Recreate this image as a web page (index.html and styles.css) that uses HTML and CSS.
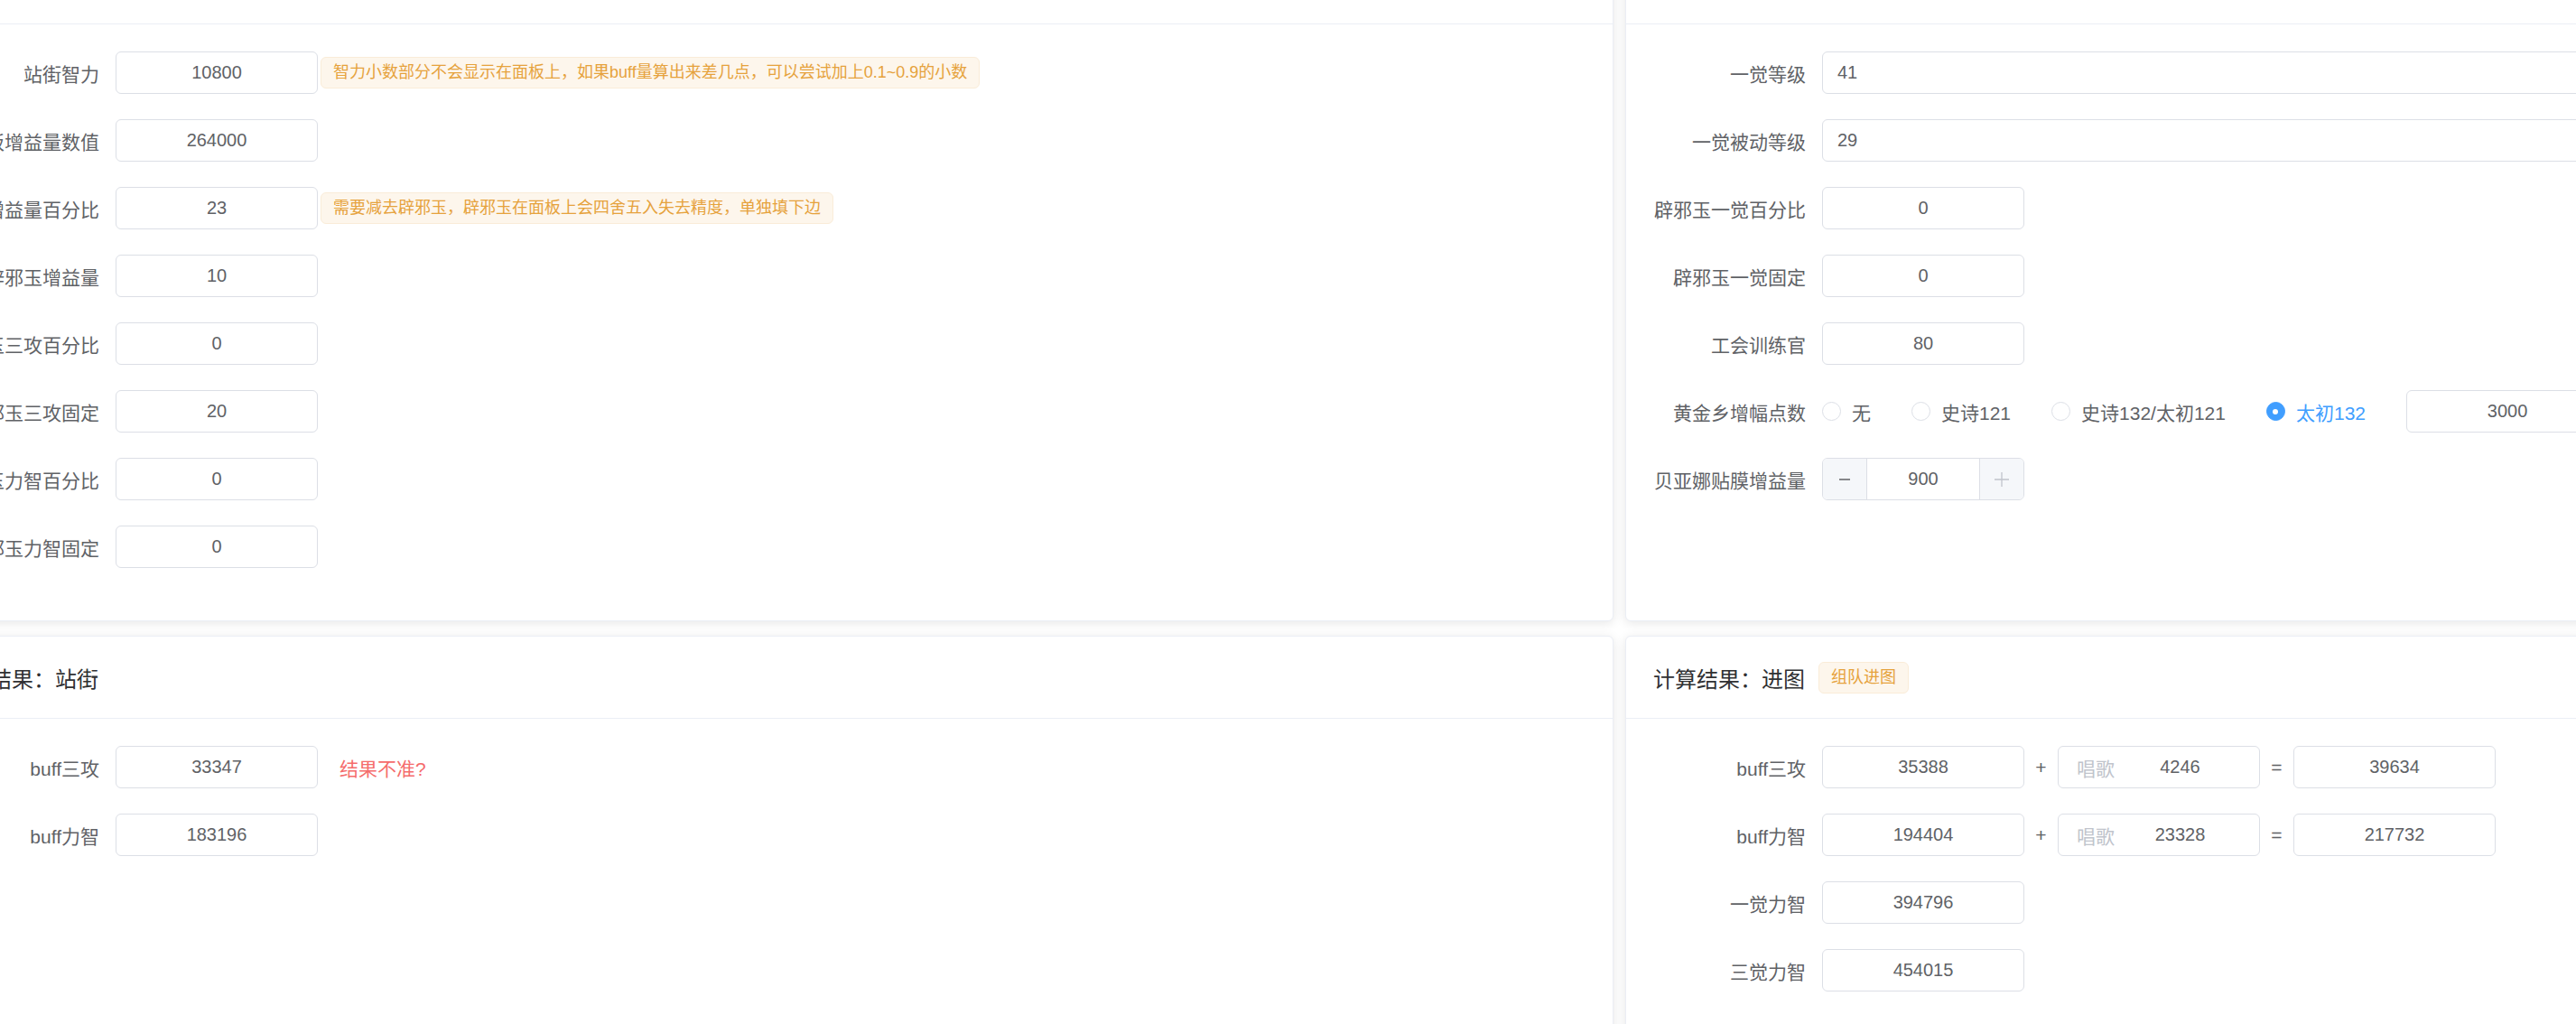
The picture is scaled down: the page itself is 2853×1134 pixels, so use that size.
FILE: index.html
```html
<!DOCTYPE html>
<html lang="zh-CN">
<head>
  <meta charset="UTF-8" />
  <meta name="viewport" content="width=device-width, initial-scale=1.0"/>
  <title>奶妈 buff 计算器</title>
  <link rel="stylesheet" href="styles.css">
</head>
<body>

<div class="page">

  <!-- 站街面板 -->
  <div class="card">
    <div class="card-header">站街面板</div>
    <div class="card-body">
      <div class="form-item">
        <label class="form-label">站街智力</label>
        <div class="form-content">
          <input class="input" value="10800" />
          <span class="tip">智力小数部分不会显示在面板上，如果buff量算出来差几点，可以尝试加上0.1~0.9的小数</span>
        </div>
      </div>
      <div class="form-item">
        <label class="form-label">面板增益量数值</label>
        <div class="form-content"><input class="input" value="264000" /></div>
      </div>
      <div class="form-item">
        <label class="form-label">面板增益量百分比</label>
        <div class="form-content">
          <input class="input" value="23" />
          <span class="tip">需要减去辟邪玉，辟邪玉在面板上会四舍五入失去精度，单独填下边</span>
        </div>
      </div>
      <div class="form-item">
        <label class="form-label">辟邪玉增益量</label>
        <div class="form-content"><input class="input" value="10" /></div>
      </div>
      <div class="form-item">
        <label class="form-label">辟邪玉三攻百分比</label>
        <div class="form-content"><input class="input" value="0" /></div>
      </div>
      <div class="form-item">
        <label class="form-label">辟邪玉三攻固定</label>
        <div class="form-content"><input class="input" value="20" /></div>
      </div>
      <div class="form-item">
        <label class="form-label">辟邪玉力智百分比</label>
        <div class="form-content"><input class="input" value="0" /></div>
      </div>
      <div class="form-item">
        <label class="form-label">辟邪玉力智固定</label>
        <div class="form-content"><input class="input" value="0" /></div>
      </div>
    </div>
  </div>

  <!-- 技能等级 -->
  <div class="card">
    <div class="card-header">技能与装备</div>
    <div class="card-body">
      <div class="form-item">
        <label class="form-label">一觉等级</label>
        <div class="form-content"><input class="input wide" value="41" /></div>
      </div>
      <div class="form-item">
        <label class="form-label">一觉被动等级</label>
        <div class="form-content"><input class="input wide" value="29" /></div>
      </div>
      <div class="form-item">
        <label class="form-label">辟邪玉一觉百分比</label>
        <div class="form-content"><input class="input" value="0" /></div>
      </div>
      <div class="form-item">
        <label class="form-label">辟邪玉一觉固定</label>
        <div class="form-content"><input class="input" value="0" /></div>
      </div>
      <div class="form-item">
        <label class="form-label">工会训练官</label>
        <div class="form-content"><input class="input" value="80" /></div>
      </div>
      <div class="form-item">
        <label class="form-label">黄金乡增幅点数</label>
        <div class="form-content">
          <label class="radio"><span class="radio-inner"></span>无</label>
          <label class="radio"><span class="radio-inner"></span>史诗121</label>
          <label class="radio"><span class="radio-inner"></span>史诗132/太初121</label>
          <label class="radio checked"><span class="radio-inner"></span>太初132</label>
          <input class="input" value="3000" />
        </div>
      </div>
      <div class="form-item">
        <label class="form-label">贝亚娜贴膜增益量</label>
        <div class="form-content">
          <div class="input-number">
            <span class="step minus">
              <svg width="16" height="16" viewBox="0 0 16 16"><path d="M2 8h12" stroke="currentColor" stroke-width="1.5"/></svg>
            </span>
            <input value="900" />
            <span class="step plus">
              <svg width="18" height="18" viewBox="0 0 18 18"><path d="M1 9h16M9 1v16" stroke="currentColor" stroke-width="1.3"/></svg>
            </span>
          </div>
        </div>
      </div>
    </div>
  </div>

  <!-- 计算结果：站街 -->
  <div class="card result">
    <div class="card-header">计算结果：站街</div>
    <div class="card-body">
      <div class="form-item">
        <label class="form-label">buff三攻</label>
        <div class="form-content">
          <input class="input" value="33347" />
          <span class="warn-link">结果不准?</span>
        </div>
      </div>
      <div class="form-item">
        <label class="form-label">buff力智</label>
        <div class="form-content"><input class="input" value="183196" /></div>
      </div>
    </div>
  </div>

  <!-- 计算结果：进图 -->
  <div class="card result">
    <div class="card-header">计算结果：进图 <span class="tip header-tip">组队进图</span></div>
    <div class="card-body">
      <div class="form-item">
        <label class="form-label">buff三攻</label>
        <div class="form-content">
          <input class="input" value="35388" />
          <span class="op">+</span>
          <div class="input-prefix"><span class="prefix">唱歌</span><input value="4246" /></div>
          <span class="op">=</span>
          <input class="input" value="39634" />
        </div>
      </div>
      <div class="form-item">
        <label class="form-label">buff力智</label>
        <div class="form-content">
          <input class="input" value="194404" />
          <span class="op">+</span>
          <div class="input-prefix"><span class="prefix">唱歌</span><input value="23328" /></div>
          <span class="op">=</span>
          <input class="input" value="217732" />
        </div>
      </div>
      <div class="form-item">
        <label class="form-label">一觉力智</label>
        <div class="form-content"><input class="input" value="394796" /></div>
      </div>
      <div class="form-item">
        <label class="form-label">三觉力智</label>
        <div class="form-content"><input class="input" value="454015" /></div>
      </div>
    </div>
  </div>

</div>

</body>
</html>
```

FILE: styles.css
```css
body {
  margin: 0;
  background: #fff;
  color: #606266;
  font-family: "Liberation Sans", "Noto Sans CJK SC", sans-serif;
  overflow: hidden;
}

.page {
  display: grid;
  grid-template-columns: 1877px 1877px;
  gap: 16px 13px;
  margin: -65px 0 0 -90px;
  width: 3767px;
}

.card {
  background: #fff;
  border: 1px solid #ebeef5;
  border-radius: 6px;
  box-shadow: 0 2px 12px 0 rgba(0, 0, 0, .1);
  overflow: hidden;
}

.card.result { min-height: 520px; }

.card-header {
  display: flex;
  align-items: center;
  height: 36px;
  padding: 27px 30px;
  border-bottom: 1px solid #ebeef5;
  font-size: 24px;
  color: #303133;
  white-space: nowrap;
}

.card-body { padding: 30px; }

.form-item {
  display: flex;
  align-items: center;
  margin-bottom: 28px;
}

.form-label {
  flex-shrink: 0;
  width: 187px;
  box-sizing: border-box;
  padding-right: 18px;
  text-align: right;
  font-size: 21px;
  white-space: nowrap;
}

.form-content {
  flex: 1;
  min-width: 0;
  display: flex;
  align-items: center;
}

.input {
  flex-shrink: 0;
  width: 224px;
  height: 47px;
  box-sizing: border-box;
  padding: 0 16px;
  border: 1px solid #dcdfe6;
  border-radius: 6px;
  background: #fff;
  font-family: inherit;
  font-size: 20px;
  color: #606266;
  text-align: center;
  outline: none;
}

.input.wide { flex: 1; width: auto; text-align: left; }

.tip {
  display: inline-block;
  height: 35px;
  line-height: 33px;
  box-sizing: border-box;
  padding: 0 13px;
  margin-left: 3px;
  background: #fdf6ec;
  border: 1px solid #faecd8;
  border-radius: 6px;
  color: #e6a23c;
  font-size: 18px;
  white-space: nowrap;
}

.header-tip { margin-left: 15px; }

.warn-link {
  margin-left: 24px;
  color: #f56c6c;
  font-size: 21px;
}

/* radio group */
.radio {
  display: flex;
  align-items: center;
  margin-right: 45px;
  font-size: 21px;
  white-space: nowrap;
  cursor: pointer;
}

.radio-inner {
  display: flex;
  align-items: center;
  justify-content: center;
  width: 21px;
  height: 21px;
  box-sizing: border-box;
  margin-right: 12px;
  border: 1px solid #dcdfe6;
  border-radius: 50%;
  background: #fff;
}

.radio.checked { color: #409eff; }
.radio.checked .radio-inner { border-color: #409eff; background: #409eff; }
.radio.checked .radio-inner::after {
  content: "";
  width: 6px;
  height: 6px;
  border-radius: 50%;
  background: #fff;
}

/* number stepper */
.input-number {
  display: flex;
  width: 224px;
  height: 47px;
  box-sizing: border-box;
  border: 1px solid #dcdfe6;
  border-radius: 6px;
  overflow: hidden;
}

.input-number input {
  flex: 1;
  min-width: 0;
  border: none;
  outline: none;
  font-family: inherit;
  font-size: 20px;
  color: #606266;
  text-align: center;
}

.step {
  display: flex;
  align-items: center;
  justify-content: center;
  width: 48px;
  background: #f5f7fa;
  color: #606266;
}

.step.minus { border-right: 1px solid #dcdfe6; }
.step.plus { border-left: 1px solid #dcdfe6; color: #c0c4cc; }

/* result rows */
.op {
  width: 37px;
  flex-shrink: 0;
  text-align: center;
  font-size: 21px;
}

.input-prefix {
  display: flex;
  align-items: center;
  flex-shrink: 0;
  width: 224px;
  height: 47px;
  box-sizing: border-box;
  padding: 0 15px 0 20px;
  border: 1px solid #dcdfe6;
  border-radius: 6px;
}

.prefix { color: #c0c4cc; font-size: 21px; }

.input-prefix input {
  flex: 1;
  min-width: 0;
  border: none;
  outline: none;
  font-family: inherit;
  font-size: 20px;
  color: #606266;
  text-align: center;
}
```
